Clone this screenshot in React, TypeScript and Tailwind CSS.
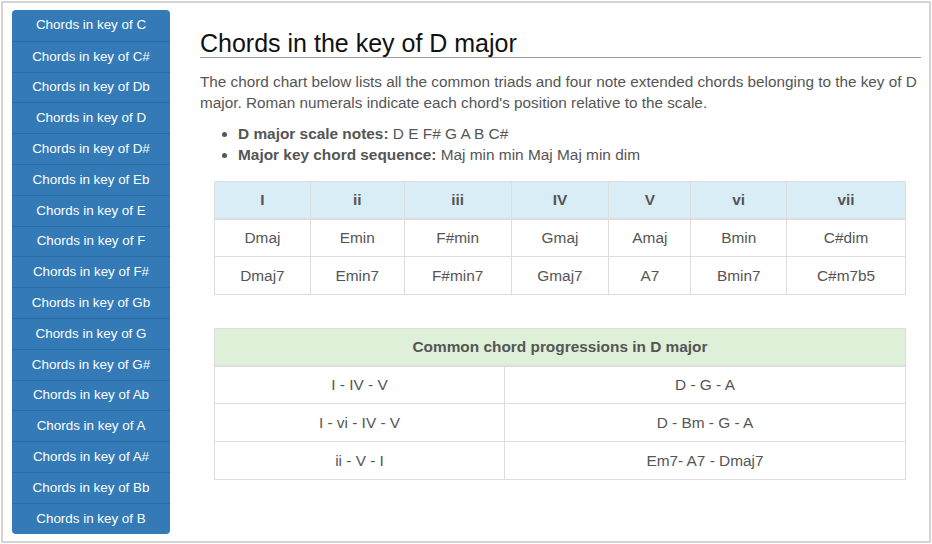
const KEYS = ["C", "C#", "Db", "D", "D#", "Eb", "E", "F", "F#", "Gb", "G", "G#", "Ab", "A", "A#", "Bb", "B"];

const NUMERALS = ["I", "ii", "iii", "IV", "V", "vi", "vii"];
const WIDTHS = [96, 94, 107, 98, 82, 96, 119];
const TRIADS = ["Dmaj", "Emin", "F#min", "Gmaj", "Amaj", "Bmin", "C#dim"];
const SEVENTHS = ["Dmaj7", "Emin7", "F#min7", "Gmaj7", "A7", "Bmin7", "C#m7b5"];

const PROGRESSIONS: [string, string][] = [
  ["I - IV - V", "D - G - A"],
  ["I - vi - IV - V", "D - Bm - G - A"],
  ["ii - V - I", "Em7- A7 - Dmaj7"],
];

function Sidebar() {
  return (
    <div className="w-[158px] shrink-0 self-start flex flex-col rounded-[4px] overflow-hidden bg-[#337ab7]">
      {KEYS.map((k, i) => (
        <div
          key={k}
          className={
            "h-[30.8px] flex items-center justify-center text-white text-[13.4px] " +
            (i === 0 ? "" : "border-t border-[#2a6aa2]")
          }
        >
          Chords in key of {k}
        </div>
      ))}
    </div>
  );
}

export default function App() {
  return (
    <div className="w-[932px] h-[544px] bg-white p-px" style={{ fontFamily: '"Liberation Sans", Arial, sans-serif' }}>
      <div className="w-[930px] h-[542px] border-2 border-[#d4d4d4] flex pl-[9px] pt-[7px]">
        <Sidebar />
        <div className="ml-[30px] w-[721px] pt-[20px] text-[#555]">
          <h1 className="text-[25px] leading-[27px] text-[#111] border-b border-[#9a9a9a]">
            Chords in the key of D major
          </h1>
          <p className="mt-[13px] w-[724px] text-[15.3px] leading-[21px]">
            The chord chart below lists all the common triads and four note extended chords belonging to the key of D
            major. Roman numerals indicate each chord's position relative to the scale.
          </p>
          <ul className="mt-[10px] list-disc pl-[38px] text-[15.4px] leading-[21px]">
            <li>
              <b>D major scale notes:</b> D E F# G A B C#
            </li>
            <li>
              <b>Major key chord sequence:</b> Maj min min Maj Maj min dim
            </li>
          </ul>

          <table className="mt-[16px] ml-[14px] w-[692px] border-collapse text-[15.4px] text-center">
            <thead>
              <tr className="bg-[#d9edf7] h-[37px]">
                {NUMERALS.map((n, i) => (
                  <th
                    key={n}
                    style={{ width: WIDTHS[i] }}
                    className="border border-[#dddddd] border-b-2 font-bold"
                  >
                    {n}
                  </th>
                ))}
              </tr>
            </thead>
            <tbody>
              {[TRIADS, SEVENTHS].map((row, r) => (
                <tr key={r} className="h-[38px]">
                  {row.map((c) => (
                    <td key={c} className="border border-[#dddddd]">
                      {c}
                    </td>
                  ))}
                </tr>
              ))}
            </tbody>
          </table>

          <table className="mt-[33px] ml-[14px] w-[692px] border-collapse text-[15.4px] text-center">
            <thead>
              <tr className="bg-[#dff0d8] h-[37px]">
                <th colSpan={2} className="border border-[#dddddd] border-b-2 font-bold">
                  Common chord progressions in D major
                </th>
              </tr>
            </thead>
            <tbody>
              {PROGRESSIONS.map(([a, b]) => (
                <tr key={a} className="h-[38px]">
                  <td className="w-[290px] border border-[#dddddd]">{a}</td>
                  <td className="border border-[#dddddd]">{b}</td>
                </tr>
              ))}
            </tbody>
          </table>
        </div>
      </div>
    </div>
  );
}
